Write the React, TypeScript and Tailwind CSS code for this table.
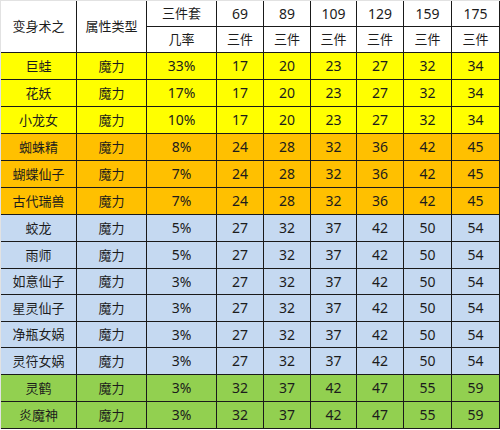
import React from "react";

type Row = { name: string; rate: string; vals: number[]; bg: string };

const groups: { bg: string; names: string[]; rates: string[]; vals: number[] }[] = [
  { bg: "bg-[#ffff00]", names: ["巨蛙", "花妖", "小龙女"], rates: ["33%", "17%", "10%"], vals: [17, 20, 23, 27, 32, 34] },
  { bg: "bg-[#ffc000]", names: ["蜘蛛精", "蝴蝶仙子", "古代瑞兽"], rates: ["8%", "7%", "7%"], vals: [24, 28, 32, 36, 42, 45] },
  {
    bg: "bg-[#c5d9f1]",
    names: ["蛟龙", "雨师", "如意仙子", "星灵仙子", "净瓶女娲", "灵符女娲"],
    rates: ["5%", "5%", "3%", "3%", "3%", "3%"],
    vals: [27, 32, 37, 42, 50, 54],
  },
  { bg: "bg-[#92d050]", names: ["灵鹤", "炎魔神"], rates: ["3%", "3%"], vals: [32, 37, 42, 47, 55, 59] },
];

const rows: Row[] = groups.flatMap((g) =>
  g.names.map((n, i) => ({ name: n, rate: g.rates[i], vals: g.vals, bg: g.bg }))
);

const levels = [69, 89, 109, 129, 159, 175];

const cell = "flex items-center justify-center border-r border-b border-[#1a1a1a]";

export default function App() {
  return (
    <div
      className="w-[500px] h-[430px] bg-white text-[#1c1c1c] text-[14px] leading-none overflow-hidden"
      style={{ fontFamily: '"Noto Sans", "Noto Sans CJK SC", sans-serif' }}
    >
      <div className="grid grid-cols-[76px_70px_70px_47px_47px_46px_47px_48px_48px] grid-rows-[26px_26px_27px_27px_27px_27px_27px_27px_27px_27px_26px_27px_26px_27px_27px_27px] border-l border-t border-l-[#e2e2e2] border-t-[#e2e2e2]">
        <div className={`${cell} row-span-2 text-[13px]`}>变身术之</div>
        <div className={`${cell} row-span-2 text-[13px]`}>属性类型</div>
        <div className={`${cell} text-[13px]`}>三件套</div>
        {levels.map((l) => (
          <div key={l} className={cell}>
            {l}
          </div>
        ))}
        <div className={`${cell} text-[13px]`}>几率</div>
        {levels.map((l) => (
          <div key={"s" + l} className={`${cell} text-[13px]`}>
            三件
          </div>
        ))}
        {rows.map((r) => (
          <React.Fragment key={r.name}>
            <div className={`${cell} ${r.bg} text-[13px]`}>{r.name}</div>
            <div className={`${cell} ${r.bg} text-[13px]`}>魔力</div>
            <div className={`${cell} ${r.bg}`}>{r.rate}</div>
            {r.vals.map((v, i) => (
              <div key={i} className={`${cell} ${r.bg}`}>
                {v}
              </div>
            ))}
          </React.Fragment>
        ))}
      </div>
    </div>
  );
}
